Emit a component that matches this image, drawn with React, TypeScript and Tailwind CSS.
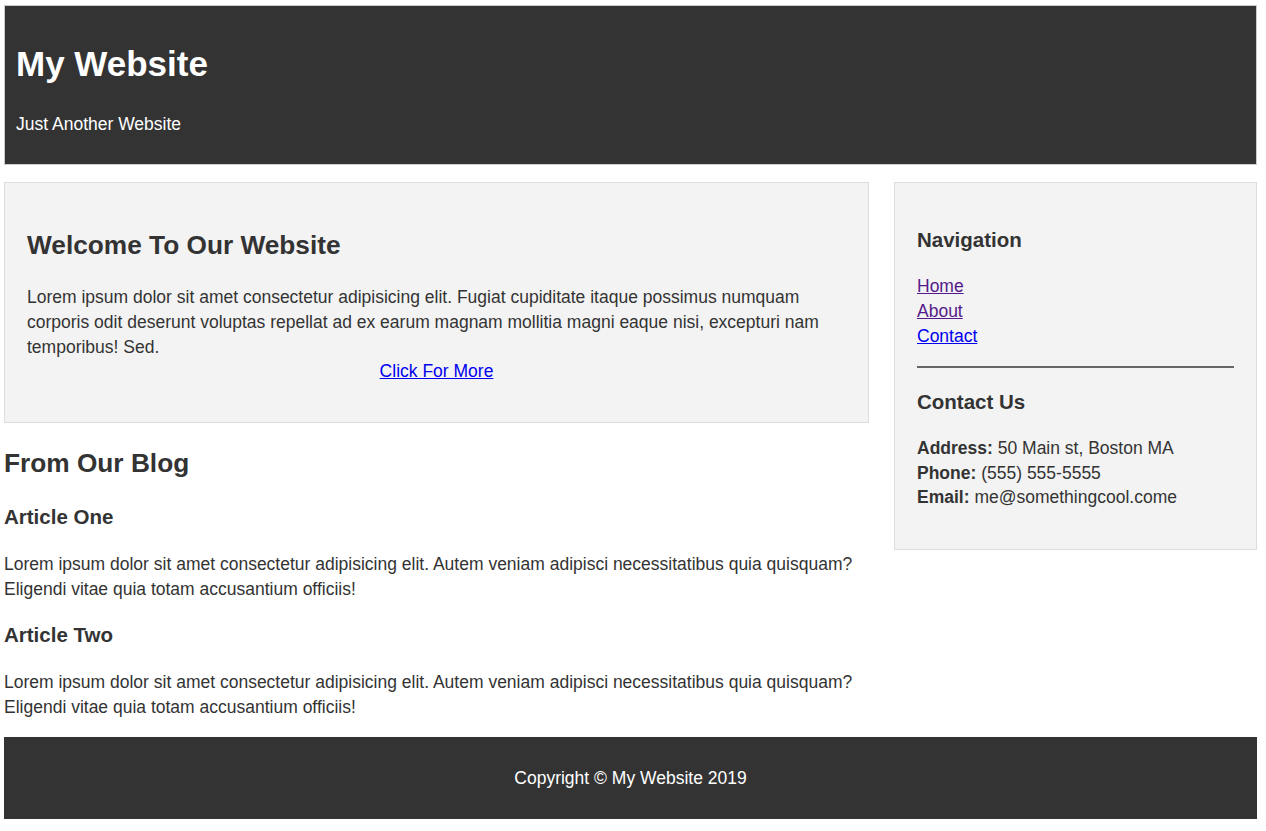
export default function App() {
  const articles = [
    {
      id: 1,
      title: "Article One",
      body: "Lorem ipsum dolor sit amet consectetur adipisicing elit. Autem veniam adipisci necessitatibus quia quisquam? Eligendi vitae quia totam accusantium officiis!",
    },
    {
      id: 2,
      title: "Article Two",
      body: "Lorem ipsum dolor sit amet consectetur adipisicing elit. Autem veniam adipisci necessitatibus quia quisquam? Eligendi vitae quia totam accusantium officiis!",
    },
  ]

  return (
    <div className="min-h-[831px] bg-white font-['Liberation_Sans',Arial,sans-serif] text-[17.5px] leading-[24.64px] text-[#333]">
      <div className="ml-[4px] w-[1253px] pt-[5px]">
        {/* Header */}
        <header className="border border-[#ccc] bg-[#333] px-[11px] pt-[32.5px] pb-[28px] text-white">
          <h1 className="text-[35px] font-bold leading-[1.4]">My Website</h1>
          <p className="mt-[24px]">Just Another Website</p>
        </header>

        <div className="mt-[17px] flex items-start gap-[25px]">
          {/* Main */}
          <main className="w-[865px]">
            <section className="border border-[#ddd] bg-[#f3f3f3] px-[22px] pt-[44.1px] pb-[37.8px]">
              <h2 className="text-[26.25px] font-bold leading-[1.4]">Welcome To Our Website</h2>
              <p className="mt-[21.3px]">
                Lorem ipsum dolor sit amet consectetur adipisicing elit. Fugiat cupiditate itaque possimus numquam
                corporis odit deserunt voluptas repellat ad ex earum magnam mollitia magni eaque nisi, excepturi nam
                temporibus! Sed.
              </p>
              <div className="text-center">
                <a href="#" className="text-[#0000ee] underline">
                  Click For More
                </a>
              </div>
            </section>

            <h2 className="mt-[22.6px] text-[26.25px] font-bold leading-[1.4]">From Our Blog</h2>
            {articles.map((a) => (
              <article key={a.id} className="mt-[19.7px] first-of-type:mt-[21.2px]">
                <h3 className="text-[20.5px] font-bold leading-[1.4]">{a.title}</h3>
                <p className="mt-[20.3px]">{a.body}</p>
              </article>
            ))}
          </main>

          {/* Sidebar */}
          <aside className="w-[363px] border border-[#ddd] bg-[#f3f3f3] px-[22px] pt-[43.1px] pb-[38.9px]">
            <h3 className="text-[20.5px] font-bold leading-[1.4]">Navigation</h3>
            <ul className="mt-[19.3px]">
              <li>
                <a href="#" className="text-[#551a8b] underline">Home</a>
              </li>
              <li>
                <a href="#" className="text-[#551a8b] underline">About</a>
              </li>
              <li>
                <a href="#" className="text-[#0000ee] underline">Contact</a>
              </li>
            </ul>
            <hr className="mt-[17.4px] border-t-2 border-[#666]" />
            <h3 className="mt-[20.6px] text-[20.5px] font-bold leading-[1.4]">Contact Us</h3>
            <p className="mt-[19.3px]">
              <strong>Address:</strong> 50 Main st, Boston MA
              <br />
              <strong>Phone:</strong> (555) 555-5555
              <br />
              <strong>Email:</strong> me@somethingcool.come
            </p>
          </aside>
        </div>

        {/* Footer */}
        <footer className="mt-[18.1px] bg-[#333] py-[28.2px] text-center text-white">
          Copyright &copy; My Website 2019
        </footer>
      </div>
    </div>
  )
}
